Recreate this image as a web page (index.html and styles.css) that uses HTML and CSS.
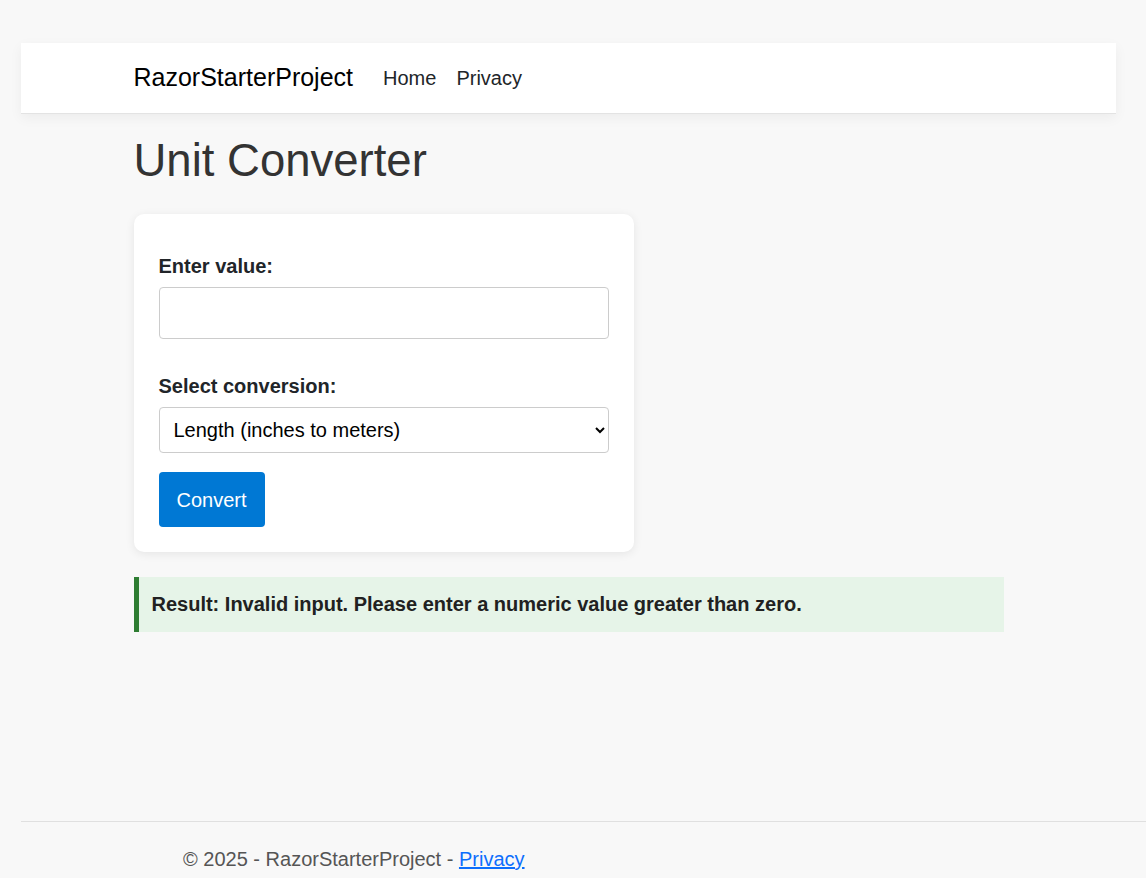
FILE: index.html
```html
<!DOCTYPE html>
<html lang="en">
<head>
<meta charset="utf-8">
<title>Unit Converter - RazorStarterProject</title>
<link rel="stylesheet" href="styles.css">
</head>
<body>
  <header class="navbar">
    <div class="container nav-inner">
      <a class="brand" href="#">RazorStarterProject</a>
      <nav class="nav-links">
        <a class="nav-link" href="#">Home</a>
        <a class="nav-link" href="#">Privacy</a>
      </nav>
    </div>
  </header>
  <main class="main">
    <div class="container">
      <h1 class="title">Unit Converter</h1>
      <form class="card">
        <div class="field">
          <label class="label" for="val">Enter value:</label>
          <input class="input" id="val" type="text">
        </div>
        <div class="field">
          <label class="label" for="conv">Select conversion:</label>
          <select class="select" id="conv">
            <option>Length (inches to meters)</option>
          </select>
        </div>
        <button class="btn" type="button">Convert</button>
      </form>
      <div class="result">Result: Invalid input. Please enter a numeric value greater than zero.</div>
    </div>
  </main>
  <footer class="footer">
    <div class="footer-inner">&copy; 2025 - RazorStarterProject - <a class="footer-link" href="#">Privacy</a></div>
  </footer>
</body>
</html>
```

FILE: styles.css
```css
* { box-sizing: border-box; }
html, body { margin: 0; }
body {
  min-height: 100vh;
  display: flex;
  flex-direction: column;
  padding: 43px 30px 0 21px;
  background: #f8f8f8;
  font-family: "Liberation Sans", Arial, sans-serif;
  font-size: 20px;
  line-height: 1.5;
  color: #212529;
}
.container {
  width: 870px;
  margin: 0 auto;
}
.navbar {
  height: 71px;
  background: #fff;
  border-bottom: 1px solid #e3e3e3;
  box-shadow: 0 4px 12px rgba(0,0,0,0.05);
  display: flex;
  align-items: center;
}
.nav-inner {
  display: flex;
  align-items: center;
}
.brand {
  font-size: 25px;
  color: #000;
  text-decoration: none;
  margin-right: 20px;
}
.nav-links { display: flex; }
.nav-link {
  color: #212529;
  text-decoration: none;
  padding: 0 10px;
}
.main { flex: 1; }
.title {
  font-size: 45.5px;
  font-weight: 400;
  line-height: 54px;
  color: #333;
  margin: 20px 0 26px;
}
.card {
  width: 500px;
  background: #fff;
  border-radius: 10px;
  box-shadow: 0 2px 10px rgba(0,0,0,0.08);
  padding: 37px 25px 25px;
}
.field { margin-bottom: 19px; }
.field + .field { margin-top: 32px; }
.label {
  display: block;
  font-weight: 700;
  margin-bottom: 6px;
}
.input {
  display: block;
  width: 100%;
  height: 52px;
  border: 1px solid #ccc;
  border-radius: 4px;
  font: inherit;
  padding: 0 14px;
  background: #fff;
}
.select {
  display: block;
  width: 100%;
  height: 46px;
  border: 1px solid #ccc;
  border-radius: 4px;
  font: inherit;
  color: #000;
  padding: 0 10px;
  background: #fff;
}
.btn {
  height: 55px;
  padding: 0 18px;
  background: #0078d4;
  color: #fff;
  border: 0;
  border-radius: 4px;
  font: inherit;
  cursor: pointer;
}
.result {
  margin-top: 25px;
  background: #e6f4e8;
  border-left: 5px solid #2e7d32;
  padding: 12px 13px 13px;
  font-weight: 700;
  color: #212121;
}
.footer {
  margin-right: -30px;
  border-top: 1px solid #e0e0e0;
  padding: 22px 0 4px 162px;
  color: #555;
}
.footer-link { color: #0d6efd; }
```
